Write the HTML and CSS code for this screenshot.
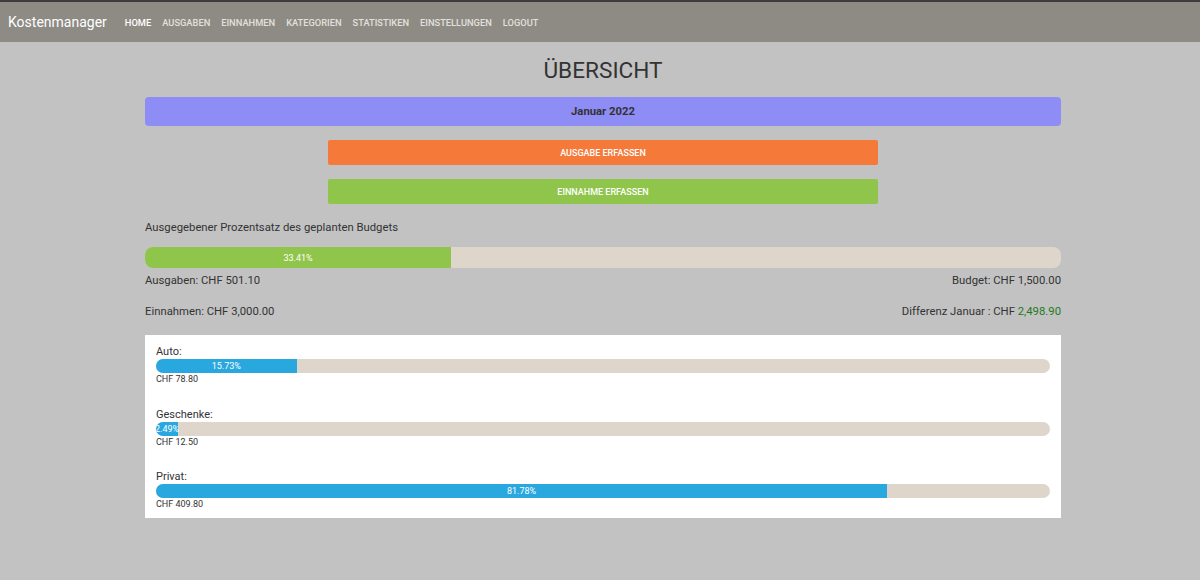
FILE: index.html
```html
<!DOCTYPE html>
<html lang="de">
<head>
<meta charset="utf-8">
<title>Kostenmanager</title>
<link rel="stylesheet" href="styles.css">
</head>
<body>
<nav class="navbar">
  <span class="brand">Kostenmanager</span>
  <ul class="nav-links">
    <li class="active">HOME</li>
    <li>AUSGABEN</li>
    <li>EINNAHMEN</li>
    <li>KATEGORIEN</li>
    <li>STATISTIKEN</li>
    <li>EINSTELLUNGEN</li>
    <li>LOGOUT</li>
  </ul>
</nav>
<div class="page">
<main class="container">
  <h1 class="title">ÜBERSICHT</h1>
  <div class="month">Januar 2022</div>
  <div class="actions">
    <button class="btn btn-orange">AUSGABE ERFASSEN</button>
    <button class="btn btn-green">EINNAHME ERFASSEN</button>
  </div>
  <p class="label">Ausgegebener Prozentsatz des geplanten Budgets</p>
  <div class="progress big">
    <div class="fill green" style="width:33.41%">33.41%</div>
  </div>
  <div class="row">
    <span>Ausgaben: CHF 501.10</span>
    <span>Budget: CHF 1,500.00</span>
  </div>
  <div class="row row2">
    <span>Einnahmen: CHF 3,000.00</span>
    <span>Differenz Januar : CHF <span class="pos">2,498.90</span></span>
  </div>
  <section class="card">
    <div class="cat">
      <div class="cat-name">Auto:</div>
      <div class="progress small"><div class="fill blue" style="width:15.73%">15.73%</div></div>
      <div class="cat-sum">CHF 78.80</div>
    </div>
    <div class="cat">
      <div class="cat-name">Geschenke:</div>
      <div class="progress small"><div class="fill blue" style="width:2.49%">2.49%</div></div>
      <div class="cat-sum">CHF 12.50</div>
    </div>
    <div class="cat">
      <div class="cat-name">Privat:</div>
      <div class="progress small"><div class="fill blue" style="width:81.78%">81.78%</div></div>
      <div class="cat-sum">CHF 409.80</div>
    </div>
  </section>
</main>
</div>
</body>
</html>
```
FILE: styles.css
```css
* { box-sizing: border-box; }
html, body { margin: 0; padding: 0; }
body {
  background: #c2c2c2;
  font-family: Roboto, "Liberation Sans", Arial, sans-serif;
  color: #333;
  font-size: 11.3px;
  height: 580px;
  overflow: hidden;
}
.navbar {
  height: 42px;
  background: #8e8a84;
  border-top: 2px solid #3d3d3d;
  display: flex;
  align-items: center;
  padding-left: 8px;
}
.brand {
  color: #fff;
  font-size: 14px;
  margin-right: 18px;
}
.nav-links {
  list-style: none;
  margin: 0;
  padding: 0;
  display: flex;
  gap: 11px;
}
.nav-links li {
  color: #e2e0dc;
  font-size: 9.3px;
  font-weight: 500;
}
.nav-links li.active { color: #fff; }
.page {
  padding-left: 6px;
}
.container {
  width: 916px;
  margin: 0 auto;
}
.title {
  margin: 15px 0 0;
  font-size: 22.6px;
  line-height: 27px;
  font-weight: 400;
  text-align: center;
  color: #333;
}
.month {
  margin-top: 13px;
  height: 29px;
  background: #8e8cf5;
  border-radius: 4px;
  display: flex;
  align-items: center;
  justify-content: center;
  font-weight: 700;
  font-size: 11.3px;
  color: #333;
}
.actions {
  margin-top: 14px;
  display: flex;
  flex-direction: column;
  align-items: center;
  gap: 14px;
}
.btn {
  width: 550px;
  height: 25px;
  border: 0;
  border-radius: 2px;
  color: #fff;
  font-family: inherit;
  font-size: 9px;
  font-weight: 500;
  padding: 0;
}
.btn-orange { background: #f57a3a; }
.btn-green { background: #8fc54a; }
.label {
  margin: 15px 0 0;
  line-height: 18px;
  font-size: 11.3px;
}
.progress {
  background: #ded6ca;
  overflow: hidden;
  display: flex;
}
.progress.big {
  margin-top: 10px;
  height: 21px;
  border-radius: 8px;
}
.fill {
  color: #fff;
  font-size: 9px;
  display: flex;
  align-items: center;
  justify-content: center;
  white-space: nowrap;
}
.fill.green { background: #8fc54a; }
.fill.blue { background: #29a8df; }
.row {
  display: flex;
  justify-content: space-between;
  line-height: 18px;
  margin-top: 4px;
}
.row2 { margin-top: 13px; }
.pos { color: #1e7a1e; }
.card {
  margin-top: 14px;
  background: #fff;
  padding: 9px 11px 7px;
  display: flex;
  flex-direction: column;
  gap: 20.5px;
}
.cat-name {
  font-size: 11px;
  line-height: 15px;
}
.progress.small {
  height: 14px;
  border-radius: 7px;
}
.cat-sum {
  font-size: 9px;
  line-height: 13px;
}
```
